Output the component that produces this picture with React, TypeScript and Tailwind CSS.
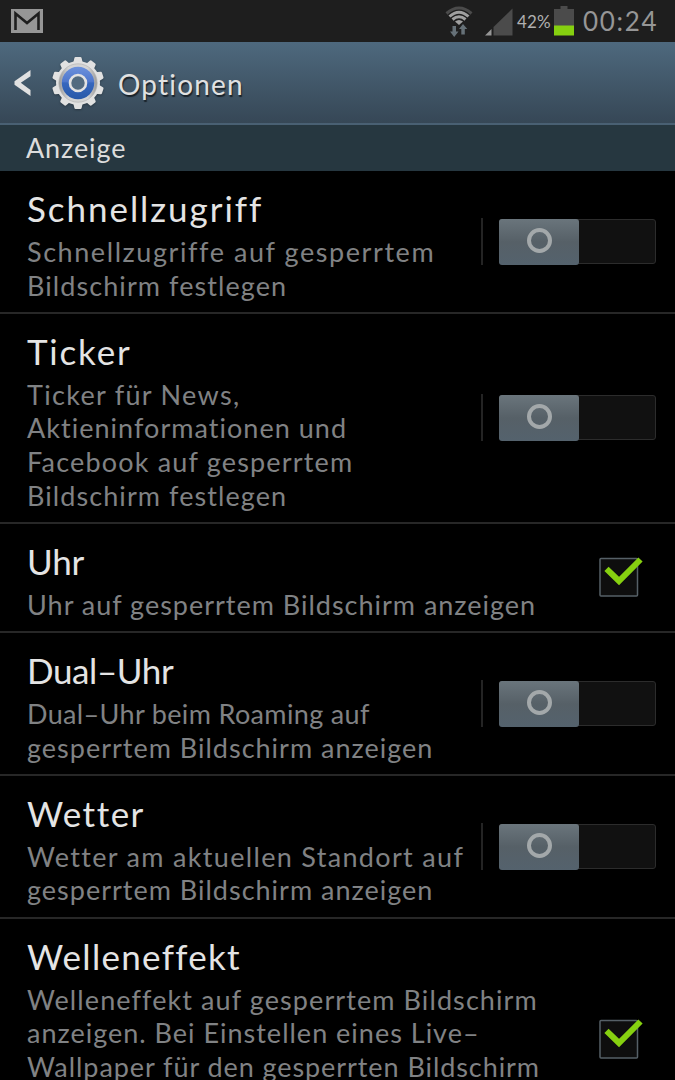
import clsx from "clsx";

interface Line {
  text: string;
  spacing: string;
}

interface Option {
  title: Line;
  lines: Line[];
  control: "switch" | "checkbox";
}

const options: Option[] = [
  {
    title: { text: "Schnellzugriff", spacing: "tracking-[1.95px]" },
    lines: [
      { text: "Schnellzugriffe auf gesperrtem", spacing: "tracking-[1.57px]" },
      { text: "Bildschirm festlegen", spacing: "tracking-[1.08px]" },
    ],
    control: "switch",
  },
  {
    title: { text: "Ticker", spacing: "tracking-[1.8px]" },
    lines: [
      { text: "Ticker für News,", spacing: "tracking-[1.3px]" },
      { text: "Aktieninformationen und", spacing: "tracking-[1.03px]" },
      { text: "Facebook auf gesperrtem", spacing: "tracking-[1.18px]" },
      { text: "Bildschirm festlegen", spacing: "tracking-[1.08px]" },
    ],
    control: "switch",
  },
  {
    title: { text: "Uhr", spacing: "tracking-[-0.2px]" },
    lines: [{ text: "Uhr auf gesperrtem Bildschirm anzeigen", spacing: "tracking-[0.99px]" }],
    control: "checkbox",
  },
  {
    title: { text: "Dual–Uhr", spacing: "tracking-[-0.4px]" },
    lines: [
      { text: "Dual–Uhr beim Roaming auf", spacing: "tracking-[0.35px]" },
      { text: "gesperrtem Bildschirm anzeigen", spacing: "tracking-[1px]" },
    ],
    control: "switch",
  },
  {
    title: { text: "Wetter", spacing: "tracking-[1.5px]" },
    lines: [
      { text: "Wetter am aktuellen Standort auf", spacing: "tracking-[1.32px]" },
      { text: "gesperrtem Bildschirm anzeigen", spacing: "tracking-[1px]" },
    ],
    control: "switch",
  },
  {
    title: { text: "Welleneffekt", spacing: "tracking-[1.3px]" },
    lines: [
      { text: "Welleneffekt auf gesperrtem Bildschirm", spacing: "tracking-[1.09px]" },
      { text: "anzeigen. Bei Einstellen eines Live–", spacing: "tracking-[1px]" },
      { text: "Wallpaper für den gesperrten Bildschirm", spacing: "tracking-[0.93px]" },
    ],
    control: "checkbox",
  },
];

function StatusBar() {
  return (
    <div className="flex h-[42px] shrink-0 items-center bg-[#1e1e1e] pl-[11px] pr-[18px] text-[#969696]">
      {/* Gmail */}
      <svg width="32" height="24" viewBox="0 0 32 24" className="-mt-px">
        <rect width="32" height="24" fill="#969696" />
        <path d="M4.5 21V4.5L16 14 27.5 4.5V21" fill="none" stroke="#1e1e1e" strokeWidth="2.6" />
      </svg>
      <div className="flex-1" />
      {/* Wifi + traffic arrows */}
      <svg width="28" height="32" viewBox="0 0 28 32" fill="none" className="mt-[2px]">
        <path d="M1.5 7.5Q14-3.5 26.5 7.5" stroke="#4b4b4b" strokeWidth="3" />
        <path d="M4.5 10.5Q14 2 23.5 10.5M7.5 13.5Q14 8 20.5 13.5" stroke="#a0a0a0" strokeWidth="3" />
        <path d="M10 15.5Q14 12.3 18 15.5L14 19Z" fill="#a0a0a0" />
        <path d="M7.5 20H11v5.5h2.5L9.2 31 5 25.5h2.5ZM16.3 28.5V23H14l4-5 4.3 5h-2.5v5.5Z" fill="#667178" />
      </svg>
      {/* Signal */}
      <svg width="28" height="28" viewBox="0 0 28 28" className="ml-[12px] mt-[1px]">
        <path d="M0 27.5 6.5 21v6.5Z" fill="#969696" />
        <path d="M8.5 27.5V19L27.5.5v27Z" fill="#4b4b4b" />
      </svg>
      <span className="ml-[4px] mt-[2px] w-[37px] text-[17px] tracking-[0.2px] text-[#b0b0b0]">42%</span>
      {/* Battery */}
      <svg width="20" height="30" viewBox="0 0 20 30" className="-mt-px">
        <path d="M6.5 0h7v3H20v17H0V3h6.5Z" fill="#4b4b4b" />
        <rect y="19.5" width="20" height="10" fill="#86d010" />
      </svg>
      <span className="ml-[9px] w-[74px] whitespace-nowrap text-[26px] leading-[40px] tracking-[1.7px]">00:24</span>
    </div>
  );
}

function GearIcon() {
  return (
    <svg width="52" height="54" viewBox="-26 -27 52 54" className="drop-shadow-[0_1px_1px_rgba(0,0,0,0.3)]">
      <defs>
        <linearGradient id="gearBlue" x1="0" y1="0" x2="0" y2="1">
          <stop offset="0" stopColor="#6c91dc" />
          <stop offset="0.45" stopColor="#5078cd" />
          <stop offset="0.5" stopColor="#3767be" />
          <stop offset="1" stopColor="#2859a8" />
        </linearGradient>
        <linearGradient id="gearRim">
          <stop offset="0" stopColor="#999" />
          <stop offset="0.25" stopColor="#d4d4d4" />
          <stop offset="0.75" stopColor="#d4d4d4" />
          <stop offset="1" stopColor="#999" />
        </linearGradient>
      </defs>
      {[...Array(10)].map((_, i) => (
        <path key={i} d="M-5-19-3.6-25Q-3.4-26-2.4-26H2.4Q3.4-26 3.6-25L5-19Z" fill="#e1e1e1" transform={`rotate(${i * 36})`} />
      ))}
      <circle r="22" fill="#e1e1e1" />
      <circle r="19.2" fill="url(#gearRim)" stroke="#b5b5b5" strokeWidth="0.7" />
      <circle r="16.2" fill="url(#gearBlue)" />
      <circle r="8" fill="#526b80" stroke="#e2e2e2" strokeWidth="2.6" />
    </svg>
  );
}

function ActionBar() {
  return (
    <div className="flex h-[83px] shrink-0 items-center border-b-2 border-[#496073] bg-linear-to-b from-[#4e697e] to-[#364756] pl-[14px]">
      <svg width="18" height="26" viewBox="0 0 18 26">
        <path d="M16.5 0v6.2L6.8 12.8 16.5 20v6L.5 14.8v-3.6Z" fill="#e1e1e1" />
      </svg>
      <div className="ml-[20px]">
        <GearIcon />
      </div>
      <h1 className="ml-[14px] mt-[3px] text-[28px] tracking-[1.2px] text-[#e1e1e1] [text-shadow:1px_2px_1px_rgba(0,0,0,0.6)]">
        Optionen
      </h1>
    </div>
  );
}

function Switch() {
  return (
    <div className="flex items-center">
      <div className="h-[47px] w-[2px] bg-[#242424]" />
      <div className="ml-[16px] flex h-[45px] w-[157px] rounded-[3px] border border-[#2c2c2c] bg-[#111]">
        <div className="-my-px -ml-px flex h-[46px] w-[80px] items-center justify-center rounded-[3px] bg-linear-to-b from-[#6a757c] via-[#566067] to-[#54626d]">
          <div className="-mt-[3px] size-[25px] rounded-full border-4 border-[#a3a8aa]" />
        </div>
      </div>
    </div>
  );
}

function Checkbox() {
  return (
    <svg width="44" height="42" viewBox="0 0 44 42" className="mr-[13px]">
      <rect x="1" y="2.5" width="37.5" height="37.5" rx="1" fill="#0e0e0e" stroke="#566067" strokeWidth="1.5" />
      <path d="M7.5 12.8 20 25 41.5 3.5" fill="none" stroke="#86d010" strokeWidth="6" />
    </svg>
  );
}

function OptionRow({ option, last }: { option: Option; last: boolean }) {
  return (
    <div
      className={clsx(
        "flex shrink-0 items-center justify-between border-b-2 border-[#272727] pl-[27px] pr-[19px]",
        last && "h-[243px]"
      )}
    >
      <div className="self-start whitespace-nowrap pb-[9.6px] pt-[15px]">
        <h2 className={clsx("text-[35px] leading-[44px] text-[#e4e4e4]", option.title.spacing)}>
          {option.title.text}
        </h2>
        <div className="pt-[5px] text-[27px] leading-[33.6px] text-[#808284]">
          {option.lines.map((line) => (
            <p key={line.text} className={line.spacing}>
              {line.text}
            </p>
          ))}
        </div>
      </div>
      {option.control === "switch" ? <Switch /> : <Checkbox />}
    </div>
  );
}

export default function App() {
  return (
    <div className="flex h-[1080px] w-[675px] flex-col overflow-hidden bg-black font-['Lato',sans-serif]">
      <StatusBar />
      <ActionBar />
      <div className="flex h-[46px] shrink-0 items-center bg-[#263740] pl-[26px] text-[27px] tracking-[0.9px] text-[#dcdcdc]">
        Anzeige
      </div>
      {options.map((option, i) => (
        <OptionRow key={option.title.text} option={option} last={i === options.length - 1} />
      ))}
    </div>
  );
}
